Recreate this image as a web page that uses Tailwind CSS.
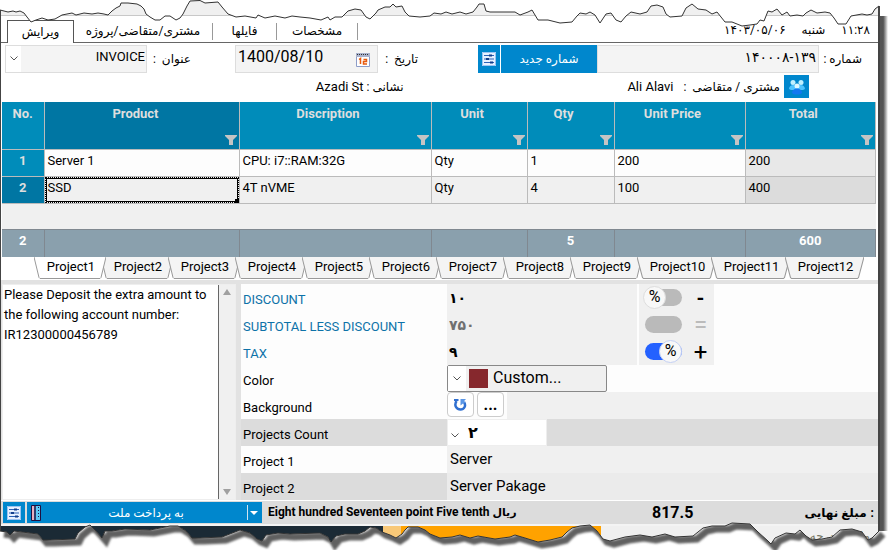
<!DOCTYPE html>
<html lang="en">
<head>
  <meta charset="UTF-8">
  <meta name="viewport" content="width=device-width, initial-scale=1">
  <title>Invoice Editor</title>
  <script src="https://cdn.jsdelivr.net/npm/@tailwindcss/browser@4"></script>
</head>
<body class="bg-white text-black font-[Roboto,'DejaVu_Sans',sans-serif] text-[13px] leading-5 overflow-x-hidden">

  <!-- Shared icons -->
  <svg class="hidden">
    <symbol id="filter" viewBox="0 0 12 10"><path d="M0 0h12v1L8 5v5H4V5L0 1z" fill="#c4c4c4"/></symbol>
    <symbol id="chevron" viewBox="0 0 8 5"><path d="M.5.5 4 4 7.500.5" fill="none" stroke="#555" stroke-width="1"/></symbol>
    <symbol id="sliders" viewBox="0 0 14 14">
      <path d="M0 0h14v14H0z" fill="#e8f1ff"/><path d="M.5.5h13v13H.5z" fill="none" stroke="#9cc4f2"/>
      <path d="M2 3.500h10M2 7h10M2 10.500h10" stroke="#2c62b8"/>
      <path d="M7 2.500h3v2H7zM4 6h3v2H4zM8 9.500h3v2H8z" fill="#143f8c"/>
    </symbol>
  </svg>

  <div class="relative">
    <div class="flex">
      <main class="flex-1 min-w-0 border-l border-[#444] border-r-2 border-r-[#444]">
        <div class="h-4 bg-[#f0f0f0] border-b border-[#c8c8c8]"></div>

        <!-- Page tabs -->
        <nav class="flex items-end h-[27px] pl-1.5 border-b border-[#666] text-xs">
          <button class="w-[67px] h-[23px] -mb-px bg-white border border-b-0 border-[#555]">ویرایش</button>
          <button class="w-[138px] h-[23px]">مشتری/متقاضی/پروژه</button>
          <span class="w-px h-[17px] mb-0.5 bg-[#999]"></span>
          <button class="w-[63px] h-[23px]">فایلها</button>
          <span class="w-px h-[17px] mb-0.5 bg-[#999]"></span>
          <button class="w-20 h-[23px]">مشخصات</button>
          <span class="w-px h-[17px] mb-0.5 bg-[#999]"></span>
          <div dir="rtl" class="flex-1 flex gap-4 pr-2 pb-1">
            <span>۱۱:۲۸</span><span>شنبه</span><span dir="ltr">۱۴۰۳/۰۵/۰۶</span>
          </div>
        </nav>

        <!-- Document fields -->
        <div class="flex items-center h-[31px] pl-1">
          <div class="relative w-[142px] h-7">
            <select id="title" class="appearance-none w-full h-full border border-[#ddd] bg-[#f4f4f4] pb-1 pr-px text-[13px] text-right [text-align-last:right]"><option>INVOICE</option></select>
            <span class="absolute left-px top-px bottom-px w-[15px] bg-white flex items-center justify-center pointer-events-none"><svg class="w-2 h-[5px]"><use href="#chevron"/></svg></span>
          </div>
          <label for="title" dir="rtl" class="w-[88px] pr-11 text-xs whitespace-nowrap">عنوان &nbsp;:</label>
          <div class="relative w-[143px] h-7">
            <input id="date" value="1400/08/10" class="w-full h-full border border-[#ddd] bg-[#f4f4f4] pl-0.5 pb-1 text-base">
            <svg class="absolute right-2 top-2 w-[14px] h-[14px]" viewBox="0 0 14 14">
              <path d="M.5 1.500h13v12H.5z" fill="#fff" stroke="#8e9dc8"/><path d="M0 0h14v4H0z" fill="#a9b2cc"/>
              <path d="M1 1.500h12" stroke="#333" stroke-dasharray="1 1"/>
              <path d="M3 6.500 4.500 5.500V11M7.500 6.500h3v2h-3v2.500h3.500" fill="none" stroke="#e8590c" stroke-width="1.500"/>
            </svg>
          </div>
          <label for="date" dir="rtl" class="w-[100px] pr-[60px] text-xs whitespace-nowrap">تاریخ &nbsp;:</label>
          <button class="w-[22px] h-7 mr-px bg-[#0087cd] flex items-center justify-center" aria-label="Settings"><svg class="w-[14px] h-[14px]"><use href="#sliders"/></svg></button>
          <button class="w-24 h-7 bg-[#0087cd] text-white text-xs">شماره جدید</button>
          <input id="number" value="۱۴۰۰۰۸-۱۳۹" class="flex-1 min-w-0 h-7 border border-[#ddd] bg-[#f4f4f4] pr-0.5 pb-1 text-sm text-right">
          <label for="number" dir="rtl" class="w-[59px] pr-4 text-xs whitespace-nowrap">شماره :</label>
        </div>

        <!-- Customer and address -->
        <div dir="rtl" class="flex items-center h-[25px] pr-[69px]">
          <button class="w-[25px] h-[23px] bg-[#0087cd] flex items-center justify-center" aria-label="Customers">
            <svg class="w-4 h-4" viewBox="0 0 16 16">
              <circle cx="4" cy="3.500" r="2.500" fill="#bff0ff"/><circle cx="12" cy="3.500" r="2.500" fill="#bff0ff"/>
              <path d="M0 10c0-5 8-5 8-1 0-4 8-4 8 1l-2 1H2z" fill="#4fc4ff"/>
              <circle cx="8" cy="7" r="2.500" fill="#dff8ff"/><path d="M3 14c0-6 10-6 10 0-2 2-8 2-10 0z" fill="#1478f0"/>
            </svg>
          </button>
          <span class="mr-1 text-xs">مشتری / متقاضی &nbsp;:</span>
          <span class="mr-2.5 w-[270px]">Ali Alavi</span>
          <span class="text-xs">نشانی : <span class="text-[13px]">Azadi St</span></span>
        </div>

        <!-- Items grid -->
        <div class="bg-[#f0f0f0] mt-[3px] ml-px mr-0.5">
          <table class="w-full table-fixed border-collapse">
            <colgroup><col class="w-[42px]"><col class="w-[195px]"><col class="w-[192px]"><col class="w-[96px]"><col class="w-[87px]"><col class="w-[131px]"><col></colgroup>
            <thead class="bg-[#008cba] text-[#dedede]">
              <tr class="h-[47px] align-top [&>th]:border-r [&>th]:border-b [&>th]:border-[#bbb] [&>th]:pt-0.5 [&>th]:relative [&>th]:font-bold [&_button]:absolute [&_button]:right-[2px] [&_button]:bottom-1 [&_svg]:w-3 [&_svg]:h-2.5">
                <th>No.</th>
                <th class="bg-[#0076a3] pr-3">Product<button aria-label="Filter"><svg><use href="#filter"/></svg></button></th>
                <th class="pr-3.5">Discription<button aria-label="Filter"><svg><use href="#filter"/></svg></button></th>
                <th class="pr-3.5">Unit<button aria-label="Filter"><svg><use href="#filter"/></svg></button></th>
                <th class="pr-3.5">Qty<button aria-label="Filter"><svg><use href="#filter"/></svg></button></th>
                <th class="pr-3.5">Unit Price<button aria-label="Filter"><svg><use href="#filter"/></svg></button></th>
                <th class="pr-3.5">Total<button aria-label="Filter"><svg><use href="#filter"/></svg></button></th>
              </tr>
            </thead>
            <tbody class="[&_td]:border-r [&_td]:border-b [&_td]:border-[#bbb] [&_td]:pl-[3px] [&_td]:pb-1">
              <tr class="h-[27px] bg-[#fdfdfd]">
                <th class="bg-[#008cba] text-[#dedede] border-r border-b border-[#bbb] pb-1">1</th>
                <td>Server 1</td><td>CPU: i7::RAM:32G</td><td>Qty</td><td>1</td><td>200</td><td class="bg-[#e8e8e8]">200</td>
              </tr>
              <tr class="h-[27px] bg-[#f0f0f0]">
                <th class="bg-[#0076a3] text-[#dedede] border-r border-b border-[#bbb] pb-1">2</th>
                <td class="relative">SSD<span class="absolute inset-0 border border-dotted border-black"></span><span class="absolute inset-px border border-black"></span><span class="absolute right-0 bottom-0 w-1 h-1 bg-black"></span></td>
                <td>4T nVME</td><td>Qty</td><td>4</td><td>100</td><td class="bg-[#dcdcdc]">400</td>
              </tr>
            </tbody>
            <tfoot class="text-white font-bold text-center">
              <tr class="h-[26px]"><td colspan="7"></td></tr>
              <tr class="h-7 bg-[#8aa0ad] [&>td]:border-r [&>td]:border-t [&>td]:border-[#808890] [&>td]:pb-1">
                <td>2</td><td></td><td></td><td></td><td>5</td><td></td><td>600</td>
              </tr>
            </tfoot>
          </table>
        </div>

        <!-- Project tabs -->
        <div id="projects" class="flex h-[23px] pl-[33px]"></div>

        <div class="flex bg-[#e2e2e2] pt-1">
          <!-- Note -->
          <div class="flex w-[234px] h-[216px] ml-px bg-white border border-[#eee] shrink-0">
            <textarea aria-label="Note" class="flex-1 min-w-0 resize-none overflow-hidden bg-white border-r border-[#666] pl-px">Please Deposit the extra amount to
the following account number:
IR12300000456789</textarea>
            <div class="w-4 bg-[#f0f0f0] flex flex-col items-center justify-between py-1">
              <svg class="w-2 h-1.5" viewBox="0 0 8 6"><path d="M4 0l4 6H0z" fill="#a0a0a0"/></svg>
              <svg class="w-2 h-1.5" viewBox="0 0 8 6"><path d="M4 6l4-6H0z" fill="#a0a0a0"/></svg>
            </div>
          </div>

          <!-- Properties -->
          <div class="flex-1 min-w-0 ml-[5px] bg-[#fdfdfd] [&>div]:flex [&>div]:h-[27px] [&>div>label]:w-[206px] [&>div>label]:shrink-0 [&>div>label]:pl-0.5 [&>div>label]:pt-1.5">
            <div>
              <label for="discount" class="text-[#0d72a8]">DISCOUNT</label>
              <input id="discount" value="۱۰" class="w-[190px] bg-[#f0f0f0] pl-0.5 text-sm font-bold">
              <span class="relative w-12 ml-0.5 bg-[#f0f0f0] px-1.5 pt-[5px]">
                <input type="checkbox" aria-label="Discount in percent" class="block appearance-none w-[37px] h-[17px] rounded-full bg-[#bababa]">
                <span class="absolute left-1 top-0.5 size-[23px] rounded-full bg-[#f8f8f8] border border-[#ddd] text-center text-base leading-5 pointer-events-none">%</span>
              </span>
              <span class="w-[27px] bg-[#f0f0f0] text-center text-xl font-bold">-</span>
            </div>
            <div>
              <label for="subtotal" class="text-[#0d72a8]">SUBTOTAL LESS DISCOUNT</label>
              <input id="subtotal" value="۷۵۰" class="w-[190px] bg-[#f0f0f0] pl-0.5 text-sm font-bold text-[#707070]">
              <span class="w-12 ml-0.5 bg-[#f0f0f0] px-1.5 pt-[5px]"><input type="checkbox" disabled aria-label="Subtotal in percent" class="block appearance-none w-[37px] h-[17px] rounded-full bg-[#bababa]"></span>
              <span class="w-[27px] bg-[#f0f0f0] text-center text-2xl leading-7 text-[#bbb]">=</span>
            </div>
            <div>
              <label for="tax" class="text-[#0d72a8]">TAX</label>
              <input id="tax" value="۹" class="w-[190px] bg-[#f0f0f0] pl-0.5 text-sm font-bold">
              <span class="relative w-12 ml-0.5 bg-[#f0f0f0] px-1.5 pt-[5px]">
                <input type="checkbox" checked aria-label="Tax in percent" class="block appearance-none w-[37px] h-[17px] rounded-full bg-[#2461ff]">
                <span class="absolute left-5 top-0.5 size-[23px] rounded-full bg-[#f8f8f8] border border-[#c4d0f4] text-center text-base leading-5 pointer-events-none">%</span>
              </span>
              <span class="w-[27px] bg-[#f0f0f0] text-center text-2xl leading-7">+</span>
            </div>
            <div>
              <label for="color">Color</label>
              <span class="relative w-40">
                <select id="color" class="appearance-none w-full h-full bg-[#f0f0f0] border border-[#888] rounded-xs pl-[45px] pb-0.5 text-base"><option>Custom...</option></select>
                <span class="absolute left-px inset-y-px w-[18px] bg-white flex items-center justify-center pointer-events-none"><svg class="w-2 h-[5px]"><use href="#chevron"/></svg></span>
                <span class="absolute left-[22px] top-1 size-[19px] bg-[#86282d] pointer-events-none"></span>
              </span>
            </div>
            <div class="bg-[#f0f0f0]">
              <label for="background" class="bg-[#fdfdfd]">Background</label>
              <span class="flex gap-[3px] w-[60px] pb-0.5 bg-[#fdfdfd]">
                <button aria-label="Reset background" class="w-[27px] rounded border border-[#ccc] bg-white flex items-center justify-center">
                  <svg class="w-[13px] h-[13px]" viewBox="0 0 13 13"><path d="M2.500 3C-.5 8 3 11.500 6.500 11.500S12.500 8 10 4" fill="none" stroke="#2f6fd0" stroke-width="2.500"/><path d="M6.500 7.500V1H12L10.200 3 11 5 9 5.500z" fill="#5a96e6"/><path d="M0 2h4.500" stroke="#2f6fd0" stroke-width="2"/></svg>
                </button>
                <button id="background" class="w-[27px] rounded border border-[#ccc] bg-white text-base leading-5 font-bold">...</button>
              </span>
            </div>
            <div class="bg-[#dcdcdc]">
              <label for="count">Projects Count</label>
              <span class="relative w-[100px]">
                <select id="count" class="appearance-none w-full h-full bg-white border border-[#eee] pl-5 text-base font-bold"><option>۲</option></select>
                <svg class="absolute left-1 top-[14px] w-2 h-[5px] pointer-events-none"><use href="#chevron"/></svg>
              </span>
            </div>
            <div>
              <label for="p1">Project 1</label>
              <input id="p1" value="Server" class="flex-1 min-w-0 bg-[#f0f0f0] pl-[3px] pb-0.5 text-[15px]">
            </div>
            <div class="bg-[#dcdcdc]">
              <label for="p2">Project 2</label>
              <input id="p2" value="Server Pakage" class="flex-1 min-w-0 bg-[#ebebeb] pl-[3px] pb-0.5 text-[15px]">
            </div>
          </div>
        </div>

        <!-- Totals bar -->
        <footer class="flex items-center h-6 pl-0.5 bg-[#dcdcdc] border-t border-white text-xs font-bold">
          <button class="w-[22px] h-[21px] mr-0.5 bg-[#0087cd] flex items-center justify-center" aria-label="Payment settings"><svg class="w-[14px] h-[14px]"><use href="#sliders"/></svg></button>
          <button class="flex items-center w-[235px] h-[21px] px-1 bg-[#0087cd] text-white text-xs font-normal">
            <svg class="w-[10px] h-4" viewBox="0 0 10 16"><path d="M.5.5h9v15h-9z" fill="#5cc8f5" stroke="#201040"/><path d="M1 1h2v14H1z" fill="#e8b0c0"/><path d="M4 0v16" stroke="#201040" stroke-width="1.500"/><path d="M7.500 2v12" stroke="#201040" stroke-dasharray="1 2"/></svg>
            <span class="flex-1 pl-1">به پرداخت ملت</span>
            <span class="w-px h-[15px] bg-[#d0e4f0] mr-0.5"></span>
            <svg class="w-2 h-1" viewBox="0 0 8 4"><path d="M0 0h8L4 4z" fill="#fff"/></svg>
          </button>
          <span class="ml-1.5 w-[384px] whitespace-nowrap">Eight hundred Seventeen point Five tenth <bdi class="text-[11px]">ریال</bdi></span>
          <span class="text-base">817.5</span>
          <span dir="rtl" class="ml-auto flex gap-1 pr-1"><span>:</span><span>مبلغ نهایی</span></span>
        </footer>

        <!-- Window below the form -->
        <div class="flex h-[27px] border-t-2 border-[#f4f4f4]">
          <span class="w-[382px] bg-[#1b2a35]"></span>
          <span class="w-[18px] bg-[#f8c878]"></span>
          <span class="w-[200px] bg-[#ffa200]"></span>
          <span dir="rtl" class="flex-1 bg-[#f0f0f0] pr-2 pt-0.5 text-xs text-[#776] whitespace-nowrap overflow-hidden">مالیات درجه بندی</span>
        </div>
      </main>
      <div class="w-2 mt-4 bg-linear-to-r from-[#555] from-40% to-white"></div>
    </div>

    <!-- Torn paper edges -->
    <svg class="absolute top-0 left-0 w-full h-[30px] pointer-events-none" viewBox="0 0 888 30" preserveAspectRatio="none">
      <path d="M0 0V10L8 12 13 11 16 12 20 11 24 13 27 17 31 22 36 20 42 18 48 20 55 19 62 15 72 13 76 15 84 13 92 14 98 13 104 14 108 15 112 11 116 8 120 6 121 3 128 3 137 4 141 6 144 9 146 14 150 17 155 20 160 20 165 16 170 16 176 20 180 18 183 14 187 6 190 1 200 .5 205 3 218 2 222 7 228 14 236 17 245 16 256 18 258 15 265 18 275 16 285 18 292 16 300 17 310 18 321 20 328 17 330 20 335 17 342 17 348 11 355 9 361 10 366 17 370 19 376 13 378 10 385 7 390 7 393 4 396 7 402 6 405 12 409 16 420 17 430 16 434 13 441 14 446 12 452 14 460 12 466 14 473 12 477 7 479 4 484 4 486 11 490 12 515 12 520 15 528 12 532 10 535 15 538 20 548 20 560 23 572 22 577 16 580 13 586 14 590 12 595 15 600 23 606 14 611 13 616 20 621 22 626 16 631 12 640 14 647 12 651 6 657 5 663 7 666 14 670 17 682 16 686 8 692 4 698 9 706 10 712 14 717 12 725 22 732 22 737 24 742 26 750 25 757 24 760 20 764 21 768 11 772 12 777 9 782 15 787 12 790 16 797 15 803 16 806 13 811 10 817 13 825 12 830 13 834 18 838 24 846 24 851 16 862 14 867 15 872 14 875 9 879 6H890V-2H-2z" fill="#fff"/>
      <path d="M0 10 8 12 13 11 16 12 20 11 24 13 27 17 31 22 36 20 42 18 48 20 55 19 62 15 72 13 76 15 84 13 92 14 98 13 104 14 108 15 112 11 116 8 120 6 121 3 128 3 137 4 141 6 144 9 146 14 150 17 155 20 160 20 165 16 170 16 176 20 180 18 183 14 187 6 190 1 200 .5 205 3 218 2 222 7 228 14 236 17 245 16 256 18 258 15 265 18 275 16 285 18 292 16 300 17 310 18 321 20 328 17 330 20 335 17 342 17 348 11 355 9 361 10 366 17 370 19 376 13 378 10 385 7 390 7 393 4 396 7 402 6 405 12 409 16 420 17 430 16 434 13 441 14 446 12 452 14 460 12 466 14 473 12 477 7 479 4 484 4 486 11 490 12 515 12 520 15 528 12 532 10 535 15 538 20 548 20 560 23 572 22 577 16 580 13 586 14 590 12 595 15 600 23 606 14 611 13 616 20 621 22 626 16 631 12 640 14 647 12 651 6 657 5 663 7 666 14 670 17 682 16 686 8 692 4 698 9 706 10 712 14 717 12 725 22 732 22 737 24 742 26 750 25 757 24 760 20 764 21 768 11 772 12 777 9 782 15 787 12 790 16 797 15 803 16 806 13 811 10 817 13 825 12 830 13 834 18 838 24 846 24 851 16 862 14 867 15 872 14 875 9 879 6" fill="none" stroke="#333"/>
    </svg>
    <svg class="absolute bottom-0 left-0 w-full h-[30px] pointer-events-none" viewBox="0 520 888 30" preserveAspectRatio="none">
      <defs>
        <path id="tear" d="M0 530 7 531 10 534 14 530 30 532 38 533 43 539 50 539 75 538 78 532 85 526 90 524 95 529 102 537 105 530 112 530 125 528 150 529 160 527 170 525 178 525 186 530 192 537 200 537 222 536 240 529 250 532 257 538 262 540 266 534 278 532 290 533 320 532 328 536 331 541 336 535 345 533 358 533 365 530 370 526 376 527 382 531 390 534 396 537 402 533 405 529 408 526 418 526 425 529 430 533 440 537 452 536 460 534 470 537 478 535 495 538 510 536 515 534 525 537 538 541 550 539 562 536 567 531 572 527 580 525 590 524 597 530 603 538 610 540 625 536 640 534 652 536 665 533 675 536 693 535 703 527 712 525 725 525 732 522 750 523 758 531 768 540 771 543 775 537 786 532 795 533 800 529 806 535 812 539 822 538 832 536 840 529 852 528 862 531 868 539 872 537 879 530"/>
        <clipPath id="below"><path d="M0 530 7 531 10 534 14 530 30 532 38 533 43 539 50 539 75 538 78 532 85 526 90 524 95 529 102 537 105 530 112 530 125 528 150 529 160 527 170 525 178 525 186 530 192 537 200 537 222 536 240 529 250 532 257 538 262 540 266 534 278 532 290 533 320 532 328 536 331 541 336 535 345 533 358 533 365 530 370 526 376 527 382 531 390 534 396 537 402 533 405 529 408 526 418 526 425 529 430 533 440 537 452 536 460 534 470 537 478 535 495 538 510 536 515 534 525 537 538 541 550 539 562 536 567 531 572 527 580 525 590 524 597 530 603 538 610 540 625 536 640 534 652 536 665 533 675 536 693 535 703 527 712 525 725 525 732 522 750 523 758 531 768 540 771 543 775 537 786 532 795 533 800 529 806 535 812 539 822 538 832 536 840 529 852 528 862 531 868 539 872 537 879 530H888V550H0z"/></clipPath>
        <filter id="soft" x="-5%" y="-50%" width="110%" height="200%"><feGaussianBlur stdDeviation="1.200"/></filter>
      </defs>
      <g clip-path="url(#below)">
        <path d="M0 520H888V550H0z" fill="#fff"/>
        <use href="#tear" transform="translate(4 3)" fill="none" stroke="#606060" stroke-width="7" filter="url(#soft)"/>
      </g>
      <use href="#tear" fill="none" stroke="#333"/>
    </svg>
  </div>

  <script>
    // Sheet tabs, the first one is active
    const wrap = document.querySelector('#projects');
    for (let i = 1; i <= 12; i++) {
      const width = i > 9 ? 'w-[79px]' : 'w-[72px]';
      const layer = i === 1 ? 'z-10' : '-ml-[5px]';
      wrap.innerHTML += `
        <button class="relative ${width} ${layer} h-[22px] pb-1.5 pl-0.5 shrink-0">
          <svg class="absolute inset-0 w-full h-full" viewBox="0 0 72 22" preserveAspectRatio="none">
            <path d="M0 0 5 20.500 6 21.500H66L67 20.500 72 0" fill="${i === 1 ? '#fff' : '#f4f4f4'}" stroke="#999"/>
          </svg>
          <span class="relative">Project${i}</span>
        </button>`;
    }
  </script>
</body>
</html>
